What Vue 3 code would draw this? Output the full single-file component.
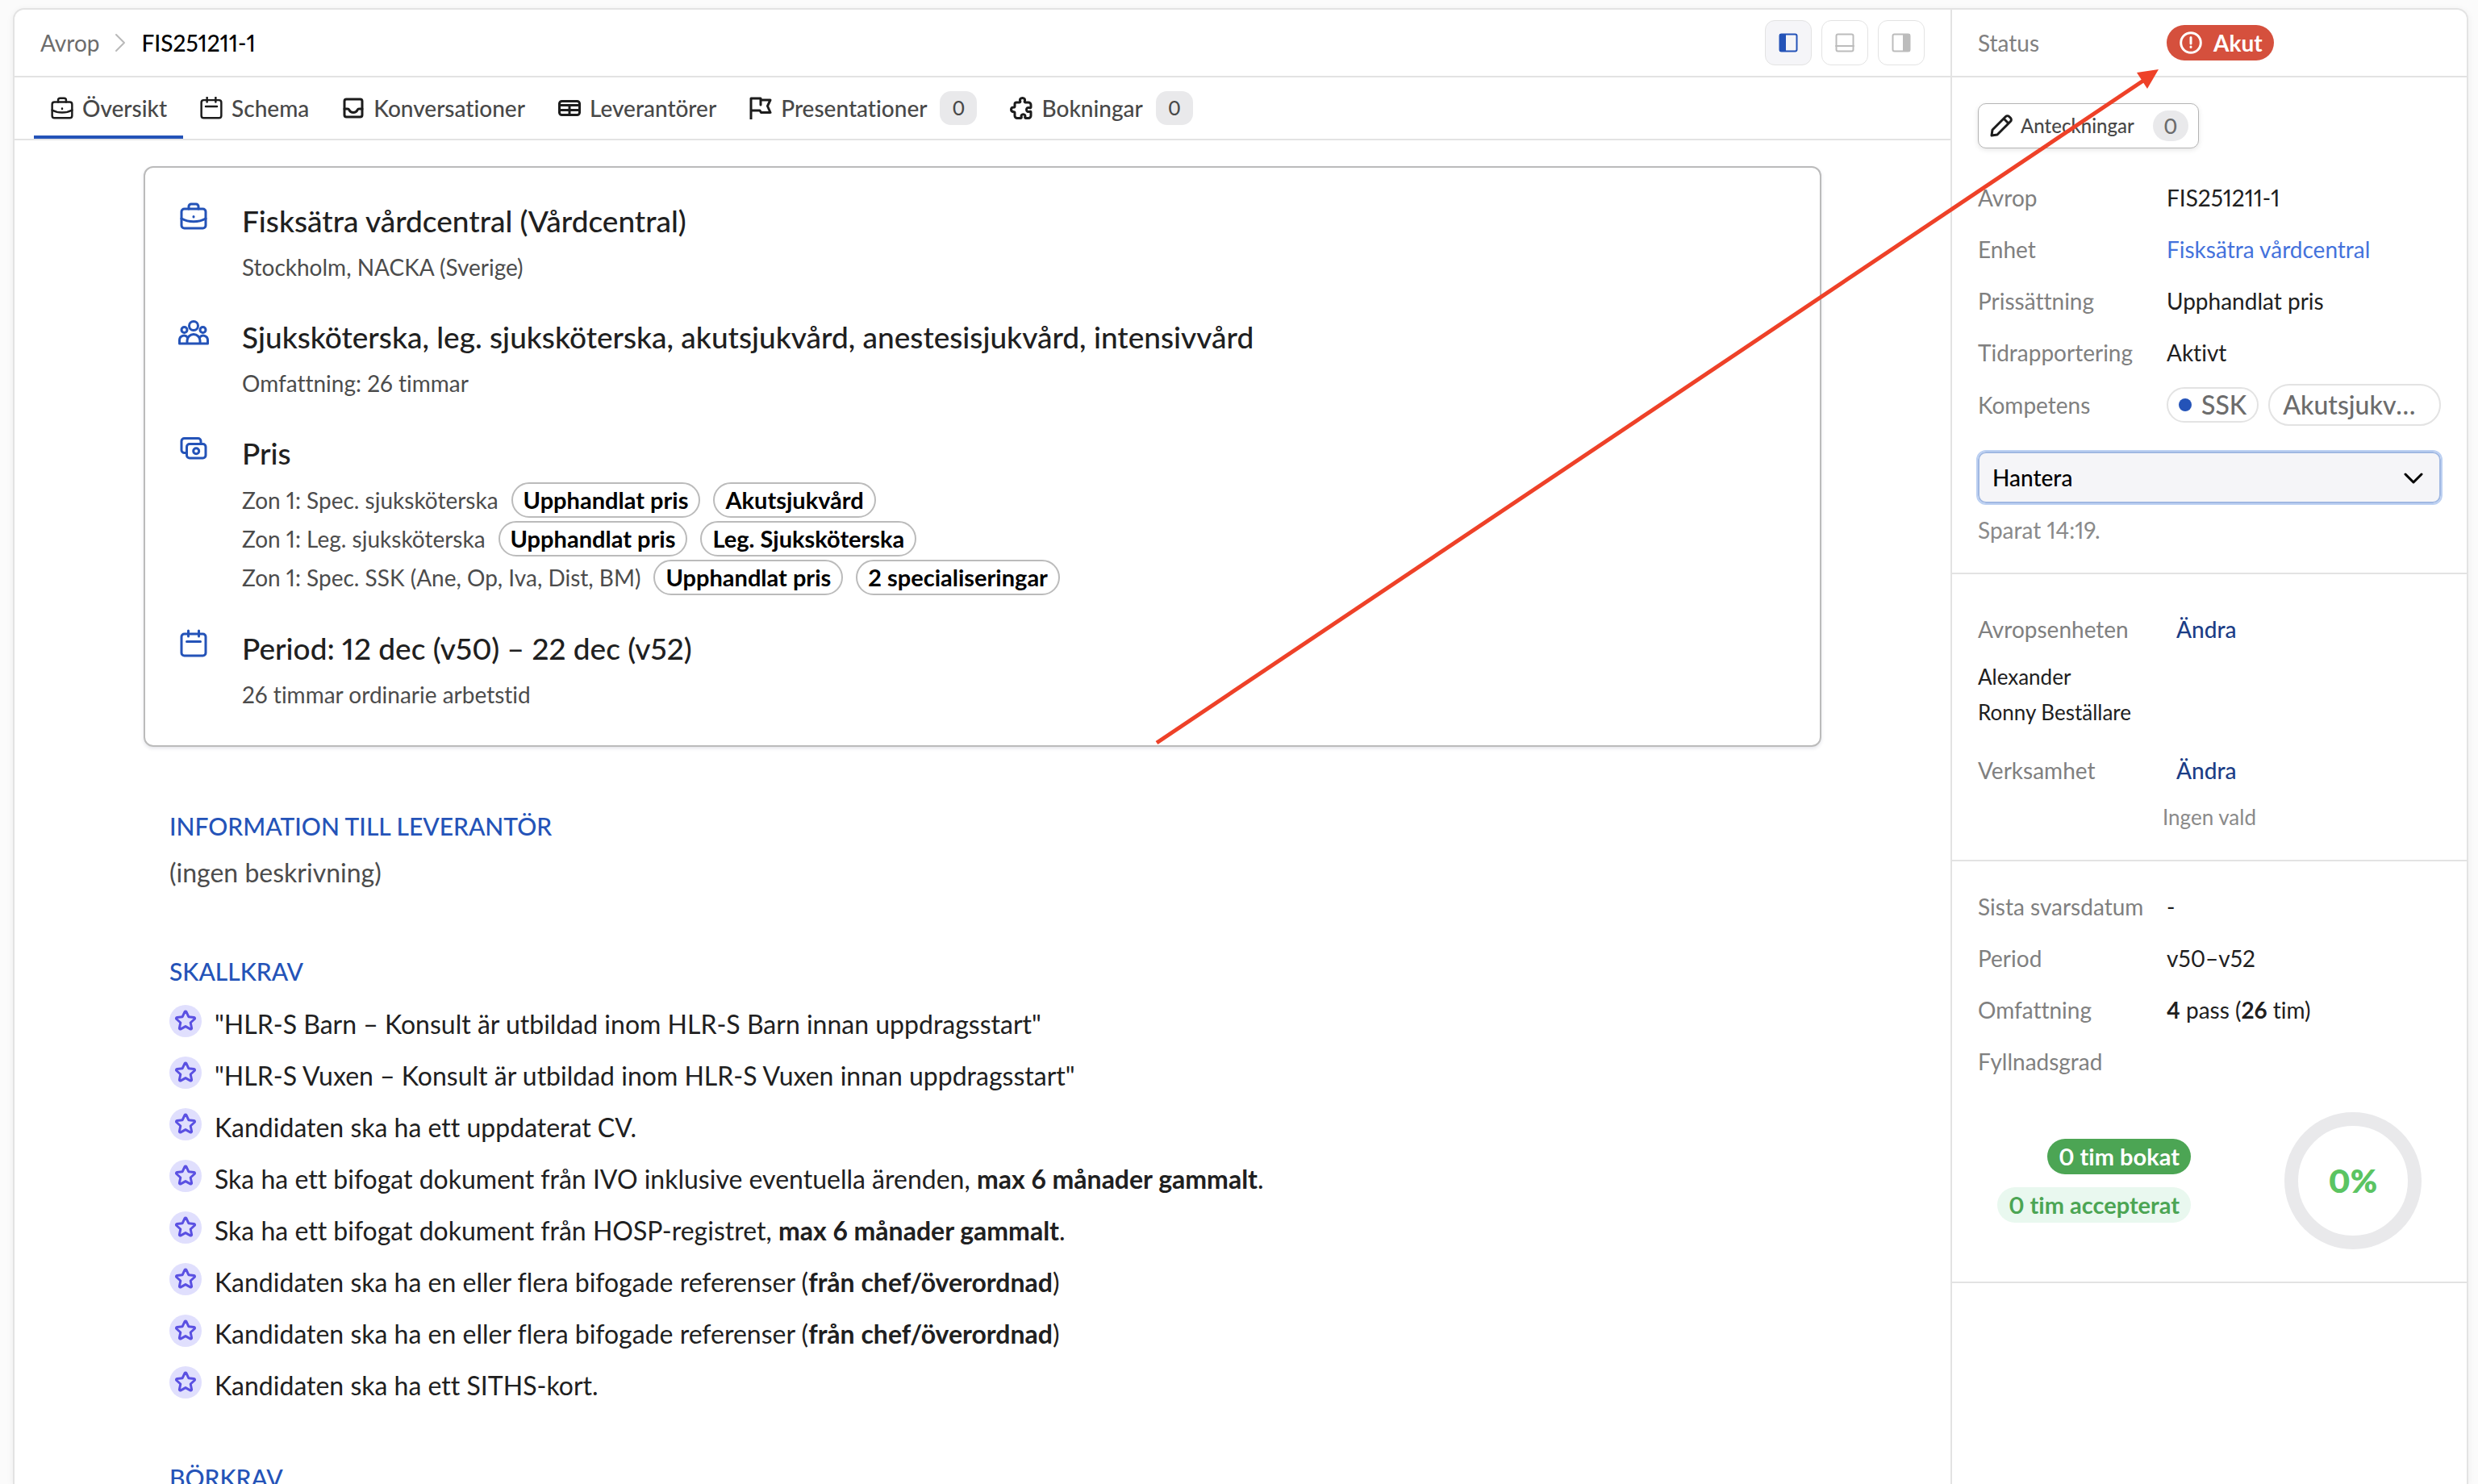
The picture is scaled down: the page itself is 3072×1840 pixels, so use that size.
<script setup>
import { ref } from 'vue'

const tabs = [
  { label: 'Översikt', icon: 'briefcase', w: 30, h: 28, active: true },
  { label: 'Schema', icon: 'calendar', w: 30, h: 28 },
  { label: 'Konversationer', icon: 'inbox', w: 30, h: 26 },
  { label: 'Leverantörer', icon: 'table', w: 30, h: 20 },
  { label: 'Presentationer', icon: 'flag', w: 30, h: 28, count: 0 },
  { label: 'Bokningar', icon: 'puzzle', w: 30, h: 28, count: 0 },
]

const prices = [
  { text: 'Zon 1: Spec. sjuksköterska', tags: ['Upphandlat pris', 'Akutsjukvård'] },
  { text: 'Zon 1: Leg. sjuksköterska', tags: ['Upphandlat pris', 'Leg. Sjuksköterska'] },
  { text: 'Zon 1: Spec. SSK (Ane, Op, Iva, Dist, BM)', tags: ['Upphandlat pris', '2 specialiseringar'] },
]

const requirements = [
  { text: '"HLR-S Barn – Konsult är utbildad inom HLR-S Barn innan uppdragsstart"' },
  { text: '"HLR-S Vuxen – Konsult är utbildad inom HLR-S Vuxen innan uppdragsstart"' },
  { text: 'Kandidaten ska ha ett uppdaterat CV.' },
  { text: 'Ska ha ett bifogat dokument från IVO inklusive eventuella ärenden, ', strong: 'max 6 månader gammalt', end: '.' },
  { text: 'Ska ha ett bifogat dokument från HOSP-registret, ', strong: 'max 6 månader gammalt', end: '.' },
  { text: 'Kandidaten ska ha en eller flera bifogade referenser (', strong: 'från chef/överordnad', end: ')' },
  { text: 'Kandidaten ska ha en eller flera bifogade referenser (', strong: 'från chef/överordnad', end: ')' },
  { text: 'Kandidaten ska ha ett SITHS-kort.' },
]

const action = ref('Hantera')
</script>

<template>
  <div class="page">
    <svg class="sprite" aria-hidden="true">
      <symbol id="briefcase" viewBox="0 0 34 34">
        <rect x="2" y="8" width="30" height="24" rx="3.5" />
        <path d="M11 8V5a3 3 0 0 1 3-3h6a3 3 0 0 1 3 3v3M2 20c9 5 21 5 30 0M17 17.500v.6" />
      </symbol>
      <symbol id="calendar" viewBox="0 0 34 34">
        <rect x="2" y="5" width="30" height="27" rx="3.500" />
        <path d="M10.500 1v7M23.500 1v7M8.500 14.500h17" />
      </symbol>
      <symbol id="people" viewBox="0 0 38 32">
        <circle cx="19" cy="8" r="5.500" />
        <circle cx="7.500" cy="13" r="3.500" />
        <circle cx="30.500" cy="13" r="3.500" />
        <path d="M11 30v-3.500a8 8 0 0 1 16 0V30zM11 30H1.500v-4.500a5.500 5.500 0 0 1 10-3M27 30h9.500v-4.500a5.500 5.500 0 0 0-10-3" />
      </symbol>
      <symbol id="cash" viewBox="0 0 34 30">
        <path d="M8 20.500H6A3.500 3.500 0 0 1 2 17V6a3.500 3.500 0 0 1 3.500-3.500h17A3.500 3.500 0 0 1 26 6v3" />
        <rect x="8.500" y="9.500" width="23.500" height="17.500" rx="3.500" />
        <circle cx="20.200" cy="18.200" r="3.500" />
      </symbol>
      <symbol id="inbox" viewBox="0 0 26 26">
        <rect x="2" y="2" width="22" height="22" rx="2.500" />
        <path d="M2 14h4c1 0 1.500.4 2 1.500 2 4 8 4 10 0 .5-1.100 1-1.500 2-1.500h4" />
      </symbol>
      <symbol id="table" viewBox="0 0 28 20">
        <rect x="1.500" y="1.500" width="25" height="17" rx="3" />
        <path d="M1.500 6.500h25M1.500 12.500h25M14 6.500v12" />
      </symbol>
      <symbol id="flag" viewBox="0 0 28 28">
        <path d="M2 27.500V2h12v2h12l-3.500 7.500L26 19.500H14.500L13 17H2M14 4v6" />
      </symbol>
      <symbol id="puzzle" viewBox="0 0 28 28">
        <path d="M8 7h4c.8 0 1-.8.7-1.600C11.800 3 13.400 1.500 15.500 1.500S19.200 3 18.300 5.400c-.3.800-.1 1.600.7 1.600h4a3 3 0 0 1 3 3v3c0 .8-.8 1-1.600.7-2.400-.9-3.900.4-3.900 2.300s1.500 3.200 3.900 2.300c.8-.3 1.600-.1 1.600.7v4.500a3 3 0 0 1-3 3h-3.500c-.8 0-1-.8-.7-1.600.6-1.800-.6-3.200-2.300-3.200s-2.900 1.400-2.300 3.200c.3.800.1 1.600-.7 1.600H9a3 3 0 0 1-3-3v-3.500c0-.8-.3-1.300-1-1.300-2.200 0-3.500-1.200-3.500-2.900S2.800 13 5 13c.7 0 1-.5 1-1.300V9a2 2 0 0 1 2-2z" />
      </symbol>
      <symbol id="star" viewBox="0 0 28 28">
        <path d="M13 2.600a1.200 1.200 0 0 1 2 0l2.800 6.100 6.700.8c1 .1 1.400 1.300.7 2l-5 4.500 1.400 6.700c.2 1-.9 1.700-1.700 1.200L14 20.600l-5.900 3.300c-.8.5-1.900-.2-1.700-1.200L7.800 16l-5-4.500c-.7-.7-.3-1.900.7-2l6.700-.8z" />
      </symbol>
    </svg>

    <div class="shell">
      <main class="main">
        <header class="topbar">
          <nav class="crumbs" aria-label="Sökväg">
            <a href="#avrop">Avrop</a>
            <svg width="14" height="24" viewBox="0 0 14 24" class="crumb-sep"><path d="M2 2l10 10L2 22" /></svg>
            <span class="current">FIS251211-1</span>
          </nav>
          <div class="views">
            <button type="button" class="view on" aria-label="Panel vänster">
              <svg width="24" height="24" viewBox="0 0 24 24"><rect x="1.500" y="1.500" width="21" height="21" rx="2" /><rect class="solid" x="1" y="1" width="8" height="22" /></svg>
            </button>
            <button type="button" class="view" aria-label="Panel nere">
              <svg width="24" height="24" viewBox="0 0 24 24"><rect x="1.500" y="1.500" width="21" height="21" rx="2" /><path d="M1 16h22" /></svg>
            </button>
            <button type="button" class="view" aria-label="Panel höger">
              <svg width="24" height="24" viewBox="0 0 24 24"><rect x="1.500" y="1.500" width="21" height="21" rx="2" /><rect class="solid" x="14" y="1" width="9" height="22" /></svg>
            </button>
          </div>
        </header>

        <nav class="tabs" aria-label="Flikar">
          <a v-for="tab in tabs" :key="tab.label" href="#flik" class="tab" :class="{ active: tab.active }">
            <svg class="icon" :width="tab.w" :height="tab.h"><use :href="'#' + tab.icon" /></svg>
            <span>{{ tab.label }}</span>
            <span v-if="tab.count !== undefined" class="count">{{ tab.count }}</span>
          </a>
        </nav>

        <div class="content">
          <section class="card">
            <div class="item">
              <svg class="icon" width="34" height="36"><use href="#briefcase" /></svg>
              <div>
                <h2>Fisksätra vårdcentral (Vårdcentral)</h2>
                <p>Stockholm, NACKA (Sverige)</p>
              </div>
            </div>
            <div class="item">
              <svg class="icon" width="38" height="36"><use href="#people" /></svg>
              <div>
                <h2>Sjuksköterska, leg. sjuksköterska, akutsjukvård, anestesisjukvård, intensivvård</h2>
                <p>Omfattning: 26 timmar</p>
              </div>
            </div>
            <div class="item">
              <svg class="icon" width="34" height="36"><use href="#cash" /></svg>
              <div>
                <h2>Pris</h2>
                <ul class="prices">
                  <li v-for="price in prices" :key="price.text">
                    <span>{{ price.text }}</span>
                    <span v-for="tag in price.tags" :key="tag" class="tag">{{ tag }}</span>
                  </li>
                </ul>
              </div>
            </div>
            <div class="item">
              <svg class="icon" width="34" height="36"><use href="#calendar" /></svg>
              <div>
                <h2>Period: 12 dec (v50) – 22 dec (v52)</h2>
                <p>26 timmar ordinarie arbetstid</p>
              </div>
            </div>
          </section>

          <section class="block">
            <h3>INFORMATION TILL LEVERANTÖR</h3>
            <p class="muted">(ingen beskrivning)</p>
          </section>

          <section class="block">
            <h3>SKALLKRAV</h3>
            <ul class="reqs">
              <li v-for="(req, i) in requirements" :key="i">
                <span class="star"><svg width="28" height="28"><use href="#star" /></svg></span>
                <span>{{ req.text }}<strong v-if="req.strong">{{ req.strong }}</strong>{{ req.end }}</span>
              </li>
            </ul>
          </section>

          <section class="block">
            <h3>BÖRKRAV</h3>
          </section>
        </div>
      </main>

      <aside class="side">
        <div class="status">
          <span class="label">Status</span>
          <span class="urgent">
            <svg width="28" height="28" viewBox="0 0 28 28"><circle cx="14" cy="14" r="12.300" /><path d="M14 7.500v7.500M14 19v.6" /></svg>
            Akut
          </span>
        </div>

        <section class="panel details">
          <button type="button" class="notes">
            <svg width="28" height="28" viewBox="0 0 28 28"><path d="M2 26l1-7L19.500 2.500a3 3 0 0 1 4.200 0l1.800 1.800a3 3 0 0 1 0 4.200L9 25zM17 5l6 6" /></svg>
            <span>Anteckningar</span>
            <span class="notes-count">0</span>
          </button>

          <dl class="rows">
            <div><dt>Avrop</dt><dd>FIS251211-1</dd></div>
            <div><dt>Enhet</dt><dd><a href="#enhet">Fisksätra vårdcentral</a></dd></div>
            <div><dt>Prissättning</dt><dd>Upphandlat pris</dd></div>
            <div><dt>Tidrapportering</dt><dd>Aktivt</dd></div>
            <div class="skills">
              <dt>Kompetens</dt>
              <dd class="chips">
                <span class="chip"><i class="dot"></i>SSK</span>
                <span class="chip wide"><span>Akutsjukvård</span></span>
              </dd>
            </div>
          </dl>

          <div class="select">
            <select v-model="action" aria-label="Status för hantering">
              <option>Hantera</option>
            </select>
            <svg width="24" height="14" viewBox="0 0 24 14"><path d="M2 2l10 10L22 2" /></svg>
          </div>
          <p class="saved">Sparat 14:19.</p>
        </section>

        <section class="panel people">
          <div class="row"><span class="label">Avropsenheten</span><button type="button" class="edit">Ändra</button></div>
          <ul class="names">
            <li>Alexander</li>
            <li>Ronny Beställare</li>
          </ul>
          <div class="row unit"><span class="label">Verksamhet</span><button type="button" class="edit">Ändra</button></div>
          <p class="none">Ingen vald</p>
        </section>

        <section class="panel facts">
          <dl class="rows">
            <div><dt>Sista svarsdatum</dt><dd>-</dd></div>
            <div><dt>Period</dt><dd>v50–v52</dd></div>
            <div><dt>Omfattning</dt><dd><b>4</b> pass (<b>26</b> tim)</dd></div>
            <div><dt>Fyllnadsgrad</dt><dd></dd></div>
          </dl>
          <div class="fill">
            <div class="fill-tags">
              <span class="booked">0 tim bokat</span>
              <span class="accepted">0 tim accepterat</span>
            </div>
            <div class="donut">0%</div>
          </div>
        </section>
      </aside>
    </div>

    <svg class="arrow" width="1250" height="844" viewBox="0 0 1250 844" aria-hidden="true">
      <path class="line" d="M4 839L1230 16" />
      <path class="head" d="M1246 4L1219 8L1232 28Z" />
    </svg>
  </div>
</template>

<style>
body {
  margin: 0;
  background: #fbfbfb;
}
</style>

<style scoped>
* {
  box-sizing: border-box;
}
.page {
  position: relative;
  display: flex;
  height: 100vh;
  padding: 10px 12px 0 16px;
  overflow: hidden;
  font: 400 28px/40px Lato, "Liberation Sans", sans-serif;
  font-variant-ligatures: no-common-ligatures;
  font-variant-numeric: proportional-nums;
  color: #202020;
}
h2, h3, p, ul, dl, dd {
  margin: 0;
  padding: 0;
  list-style: none;
}
a {
  color: inherit;
  text-decoration: none;
}
button {
  font: inherit;
  color: inherit;
  cursor: pointer;
}
svg {
  flex: none;
  fill: none;
  stroke: currentColor;
  stroke-width: 3;
  stroke-linecap: round;
  stroke-linejoin: round;
}
.sprite {
  position: absolute;
  width: 0;
  height: 0;
}
.shell {
  flex: 1;
  display: flex;
  min-width: 0;
  background: #fff;
  border: 2px solid #e3e3e3;
  border-bottom: 0;
  border-radius: 14px 14px 0 0;
  box-shadow: 0 2px 10px rgba(0, 0, 0, 0.06);
  overflow: hidden;
}
.main {
  flex: 1;
  min-width: 0;
  overflow: hidden;
}
.topbar {
  display: flex;
  align-items: center;
  justify-content: space-between;
  height: 84px;
  padding: 0 32px;
  border-bottom: 2px solid #e3e3e3;
}
.crumbs {
  display: flex;
  align-items: center;
  gap: 19px;
  color: #6c6c6c;
}
.crumb-sep {
  color: #b9b9b9;
  stroke-width: 2;
}
.current {
  color: #000;
  font-weight: 500;
}
.views {
  display: flex;
  gap: 12px;
}
.view {
  display: grid;
  place-items: center;
  width: 58px;
  height: 56px;
  padding: 0;
  color: #bcbcbc;
  background: #fff;
  border: 1px solid #e3e3e3;
  border-radius: 12px;
}
.view.on {
  color: #2453b8;
  background: #f5f5f8;
}
.solid {
  fill: currentColor;
  stroke: none;
}
.view svg {
  stroke-width: 2;
}
.tabs {
  display: flex;
  height: 78px;
  padding: 0 24px;
  border-bottom: 2px solid #e3e3e3;
}
.tab {
  display: flex;
  align-items: center;
  gap: 10px;
  padding: 4px 20px 0;
  color: #484848;
  border-bottom: 4px solid transparent;
  font-weight: 500;
}
.tab.active {
  border-color: #2453b8;
}
.tab .icon {
  color: #1c1c1c;
}
.count {
  width: 46px;
  margin-left: 6px;
  background: #e9e9eb;
  border-radius: 14px;
  font-size: 24px;
  line-height: 42px;
  text-align: center;
}
.content {
  max-width: 2080px;
  margin: 32px auto 0;
}
.card {
  display: flex;
  flex-direction: column;
  gap: 36px;
  margin-bottom: 16px;
  padding: 38px 40px 40px;
  border: 2px solid #bbb;
  border-radius: 12px;
  box-shadow: 0 2px 4px rgba(30, 40, 80, 0.12);
}
.item {
  display: grid;
  grid-template-columns: 40px 1fr;
  gap: 40px;
}
.item .icon {
  justify-self: center;
  margin-top: 4px;
  color: #2453b8;
}
.item h2 {
  margin-bottom: 6px;
  font-size: 37px;
  font-weight: 500;
  line-height: 56px;
}
.item p {
  color: #4c4c4c;
  line-height: 46px;
}
.prices {
  color: #4c4c4c;
}
.prices li {
  display: flex;
  align-items: center;
  gap: 16px;
  height: 48px;
}
.tag {
  padding: 0 13px;
  border: 2px solid #bbb;
  border-radius: 22px;
  color: #000;
  font-size: 29px;
  font-weight: 700;
}
.block {
  padding: 62px 32px 0;
}
.block h3 {
  margin-bottom: 14px;
  color: #2453b8;
  font-size: 30px;
  font-weight: 500;
}
.muted {
  padding-bottom: 16px;
  color: #4c4c4c;
  font-size: 32px;
  line-height: 48px;
}
.reqs li {
  display: flex;
  gap: 16px;
  padding: 8px 0;
  font-size: 32px;
  line-height: 48px;
}
.star {
  display: grid;
  place-items: center;
  width: 40px;
  height: 40px;
  border-radius: 50%;
  background: #e0dffd;
  color: #5a50e2;
}
.side {
  flex: none;
  width: 640px;
  border-left: 2px solid #e3e3e3;
}
.status {
  display: flex;
  align-items: center;
  height: 84px;
  padding: 0 32px;
  border-bottom: 2px solid #e3e3e3;
}
.label, dt {
  flex: none;
  width: 234px;
  color: #808080;
}
.urgent {
  display: flex;
  align-items: center;
  gap: 14px;
  height: 44px;
  padding: 0 14px 0 16px;
  border-radius: 22px;
  background: #d5503d;
  color: #fff;
  font-weight: 700;
}
.panel {
  padding: 0 32px;
  border-bottom: 2px solid #e3e3e3;
}
.details {
  padding-top: 32px;
  padding-bottom: 33px;
}
.notes {
  display: flex;
  align-items: center;
  gap: 10px;
  height: 56px;
  margin-bottom: 29px;
  padding: 0 12px 0 14px;
  border: 1px solid #b4b4b4;
  border-radius: 10px;
  background: #fff;
  box-shadow: 0 2px 6px rgba(0, 0, 0, 0.1);
  color: #484848;
  font-size: 24px;
  font-weight: 500;
}
.notes svg {
  color: #1c1c1c;
}
.notes-count {
  width: 44px;
  margin-left: 13px;
  border-radius: 20px;
  background: #e9e9eb;
  color: #6c6c6c;
  font-size: 26px;
  line-height: 38px;
}
.rows > div, .row {
  display: flex;
  align-items: center;
  min-height: 64px;
}
.rows > .skills {
  min-height: 66px;
}
.rows a {
  color: #4472dc;
}
.chips {
  display: flex;
  flex: 1;
  align-items: center;
  gap: 12px;
  min-width: 0;
  color: #6c6c6c;
  font-size: 32px;
  font-weight: 500;
}
.chip {
  display: flex;
  flex: none;
  align-items: center;
  gap: 12px;
  padding: 0 13px;
  border: 2px solid #e3e3e3;
  border-radius: 26px;
}
.chip.wide {
  flex: 1;
  min-width: 0;
  padding: 0 16px;
  line-height: 48px;
}
.chip.wide span {
  overflow: hidden;
  text-overflow: ellipsis;
  white-space: nowrap;
}
.dot {
  width: 16px;
  height: 16px;
  border-radius: 50%;
  background: #2453b8;
}
.select {
  position: relative;
  margin-top: 25px;
}
.select select {
  display: block;
  width: 100%;
  height: 64px;
  padding: 0 16px;
  appearance: none;
  border: 2px solid #a0b8e2;
  border-radius: 10px;
  outline: 2px solid #bcd0f2;
  background: #f5f5f8;
  color: #000;
  font: inherit;
  font-weight: 500;
}
.select svg {
  position: absolute;
  top: 26px;
  right: 22px;
  color: #000;
  pointer-events: none;
}
.saved {
  margin-top: 13px;
  color: #8a8a8a;
}
.people {
  padding-top: 36px;
  padding-bottom: 31px;
}
.edit {
  padding: 0 12px;
  border: 0;
  background: none;
  color: #1b3d86;
  font-weight: 500;
}
.names {
  padding: 5px 0 18px;
  font-size: 26px;
  line-height: 44px;
}
.none {
  padding-top: 4px;
  color: #8a8a8a;
  font-size: 26px;
  line-height: 44px;
  text-align: center;
}
.facts {
  padding-top: 24px;
  padding-bottom: 40px;
}
.fill {
  display: flex;
  align-items: center;
  justify-content: flex-end;
  gap: 116px;
  margin-top: 31px;
  padding-right: 24px;
}
.fill-tags {
  display: flex;
  flex-direction: column;
  align-items: flex-end;
  gap: 16px;
  font-size: 29px;
  font-weight: 700;
}
.booked, .accepted {
  padding: 0 14px;
  border-radius: 22px;
  line-height: 44px;
}
.booked {
  background: #4ca554;
  color: #fff;
}
.accepted {
  background: #e9f8ef;
  color: #4ca554;
}
.donut {
  display: grid;
  place-items: center;
  width: 170px;
  height: 170px;
  border: 17px solid #e9e9eb;
  border-radius: 50%;
  color: #5bc462;
  font-size: 40px;
  font-weight: 800;
}
.arrow {
  position: absolute;
  top: 82px;
  right: 392px;
  pointer-events: none;
  color: #ee4128;
}
.arrow .line {
  stroke-width: 5;
  stroke-linecap: butt;
}
.arrow .head {
  fill: currentColor;
  stroke: none;
}
</style>
